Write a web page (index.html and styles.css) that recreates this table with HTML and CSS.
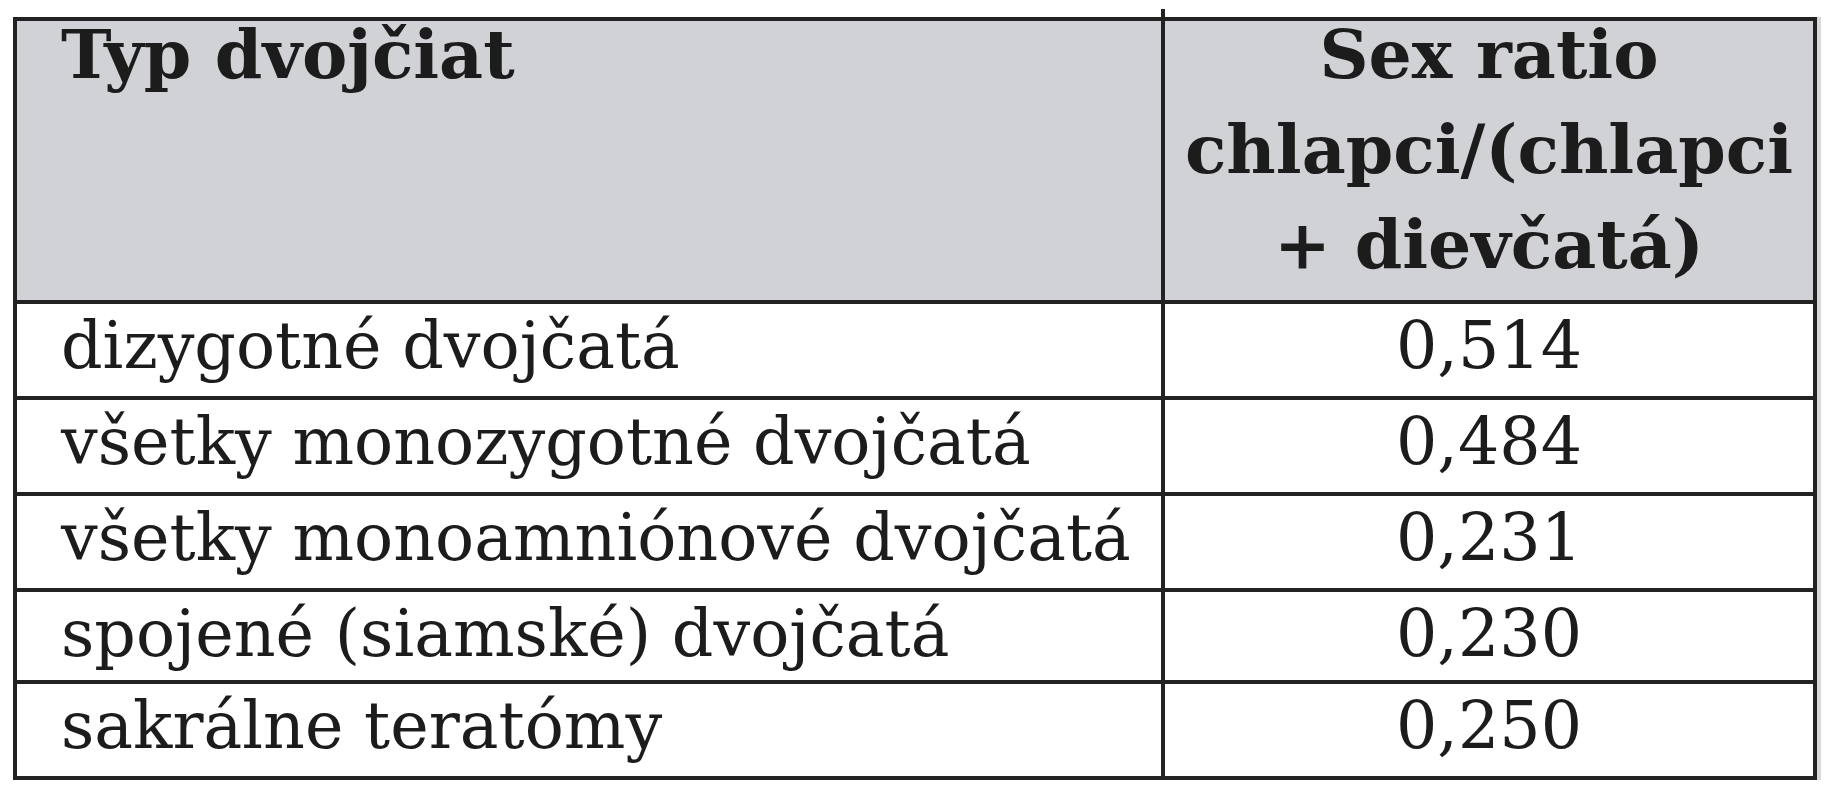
FILE: index.html
```html
<!DOCTYPE html>
<html lang="sk">
<head>
<meta charset="utf-8">
<title>Sex ratio dvojčiat</title>
<link rel="stylesheet" href="styles.css">
</head>
<body>
<table class="ratio-table">
  <colgroup>
    <col class="col-type">
    <col class="col-ratio">
  </colgroup>
  <thead>
    <tr>
      <th class="head-type"><div class="head-text">Typ dvojčiat</div></th>
      <th class="head-ratio"><div class="head-text">Sex ratio<br>chlapci/(chlapci<br>+ dievčatá)</div></th>
    </tr>
  </thead>
  <tbody>
    <tr>
      <td class="cell-type">dizygotné dvojčatá</td>
      <td class="cell-ratio">0,514</td>
    </tr>
    <tr>
      <td class="cell-type">všetky monozygotné dvojčatá</td>
      <td class="cell-ratio">0,484</td>
    </tr>
    <tr>
      <td class="cell-type">všetky monoamniónové dvojčatá</td>
      <td class="cell-ratio">0,231</td>
    </tr>
    <tr class="row-short">
      <td class="cell-type">spojené (siamské) dvojčatá</td>
      <td class="cell-ratio">0,230</td>
    </tr>
    <tr>
      <td class="cell-type">sakrálne teratómy</td>
      <td class="cell-ratio">0,250</td>
    </tr>
  </tbody>
</table>
</body>
</html>
```

FILE: styles.css
```css
html, body {
  margin: 0;
  padding: 0;
  background: #ffffff;
}

.ratio-table {
  border-collapse: collapse;
  table-layout: fixed;
  width: 1800px;
  margin: 17px 0 0 13px;
  font-family: "DejaVu Serif", "Liberation Serif", serif;
  color: #1c1c1c;
  box-shadow: 4px 0 0 #d9d9d9;
}

.col-type {
  width: 1148px;
}

.col-ratio {
  width: 652px;
}

.ratio-table th,
.ratio-table td {
  border: 4px solid #222222;
  padding: 0;
}

.ratio-table thead th {
  background: #d1d2d6;
  font-weight: bold;
  font-size: 68px;
  vertical-align: top;
  padding-bottom: 8px;
}

.head-text {
  line-height: 95px;
  margin-top: -14px;
}

.head-type {
  text-align: left;
  padding-left: 44px !important;
}

.head-ratio {
  text-align: center;
  position: relative;
}

.head-ratio::before {
  content: "";
  position: absolute;
  left: -4px;
  top: -12px;
  width: 4px;
  height: 12px;
  background: #222222;
}

.ratio-table td {
  font-size: 65px;
  line-height: 84px;
  padding-bottom: 8px;
  vertical-align: top;
  white-space: nowrap;
}

.cell-type {
  text-align: left;
  padding-left: 44px !important;
}

.cell-ratio {
  text-align: center;
}

.row-short td {
  padding-bottom: 4px;
}
```
